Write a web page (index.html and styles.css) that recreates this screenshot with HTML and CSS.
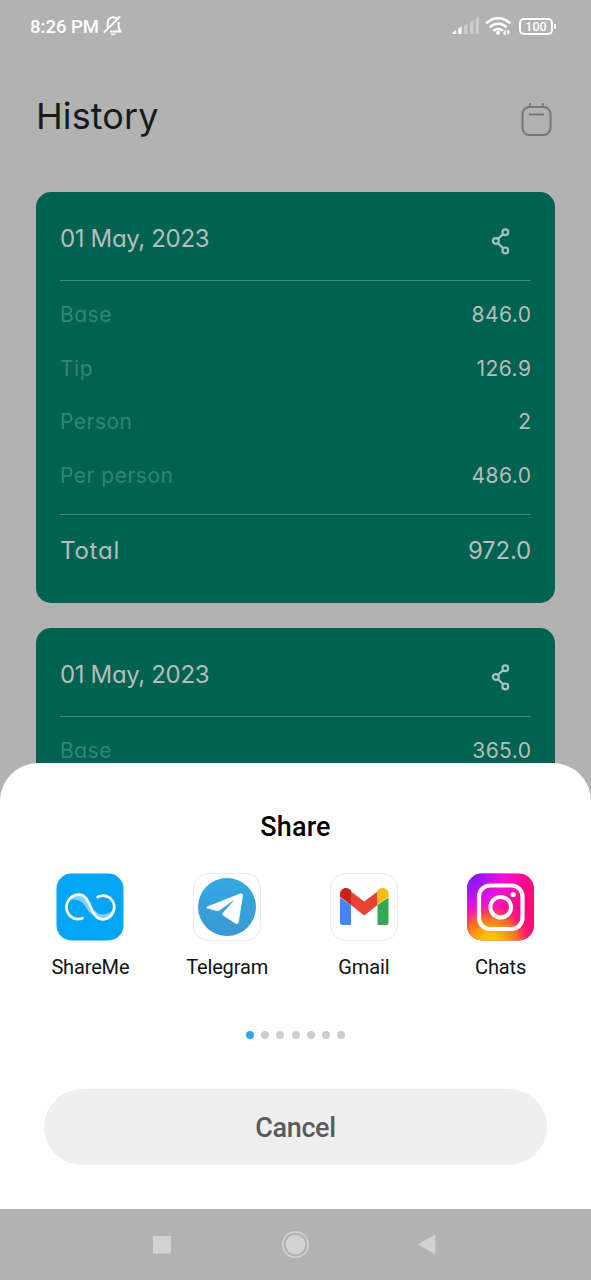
FILE: index.html
```html
<!DOCTYPE html>
<html lang="en">
<head>
<meta charset="utf-8">
<title>History</title>
<link rel="stylesheet" href="styles.css">
</head>
<body>
<div class="screen">
  <header class="status">
    <span class="clock">8:26 PM</span>
    <svg class="bell" width="20" height="22" viewBox="0 0 20 22" fill="none" stroke="#fff" stroke-width="2">
      <path d="M4.600 12.500V8.300C4.600 4.800 7 2.400 10.200 2.200c1.700 0 3 .5 4 1.500M15.600 7v5.500l2 4.100H7M.8 17.600 17.200 1.400"/>
      <path d="M7.200 18.600h5.600c-.9 2.100-4.700 2.100-5.600 0z" fill="#fff" stroke="none"/>
    </svg>
    <svg class="signal" width="28" height="18" viewBox="0 0 28 18">
      <path d="M.5 17v-1.500l3.700-2.500v4zM6.300 17v-5.500l3.200-2V17z" fill="#fff"/>
      <path d="M12 17V8.500l3.400-2V17zM18 17V5.300l3.400-2V17zM23.700 17V2l3.200-1.800V17z" fill="#cdcdcd"/>
    </svg>
    <svg class="wifi" width="26" height="20" viewBox="0 0 26 20" fill="none" stroke="#fff" stroke-width="2.500">
      <path d="M1.200 7.500c6.500-7 17.500-7 24 0M4.800 11.500c4.700-5 12.100-5 16.800 0M8.500 15c2.600-2.700 6.800-2.700 9.400 0"/>
      <circle cx="13" cy="16.800" r="2" fill="#fff" stroke="none"/>
      <path d="M20 14.500v4.500M23 14v4.500M18.300 17h1.500M23 16h1.700" stroke-width="1.500"/>
    </svg>
    <span class="battery">100</span><span class="battery-tip"></span>
  </header>

  <div class="titlebar">
    <h1 class="title">History</h1>
    <svg width="32" height="36" viewBox="0 0 32 36" fill="none" stroke="#777" stroke-width="2">
      <rect x="1.500" y="6" width="28" height="28" rx="7"/>
      <path d="M9 2v4M21.800 2v4M8 13.500h15"/>
    </svg>
  </div>

  <main class="cards">
    <section class="card">
      <div class="card-head"><span class="date">01 May, 2023</span>
        <svg class="share-icon" width="20" height="28" viewBox="0 0 20 28" fill="none" stroke="#a3c2bc" stroke-width="2.200">
          <circle cx="4.800" cy="14" r="2.900"/><circle cx="14.300" cy="5.200" r="2.900"/><circle cx="14.300" cy="23.400" r="2.900"/><path d="m6.800 11.900 5.400-4.800M6.800 16.100l5.400 5.200"/>
        </svg>
      </div>
      <div class="rows">
        <div class="row"><span class="label">Base</span><span class="value">846.0</span></div>
        <div class="row"><span class="label">Tip</span><span class="value">126.9</span></div>
        <div class="row"><span class="label">Person</span><span class="value">2</span></div>
        <div class="row"><span class="label">Per person</span><span class="value">486.0</span></div>
      </div>
      <div class="total"><span class="total-label">Total</span><span class="total-value">972.0</span></div>
    </section>
    <section class="card">
      <div class="card-head"><span class="date">01 May, 2023</span>
        <svg class="share-icon" width="20" height="28" viewBox="0 0 20 28" fill="none" stroke="#a3c2bc" stroke-width="2.200">
          <circle cx="4.800" cy="14" r="2.900"/><circle cx="14.300" cy="5.200" r="2.900"/><circle cx="14.300" cy="23.400" r="2.900"/><path d="m6.800 11.900 5.400-4.800M6.800 16.100l5.400 5.200"/>
        </svg>
      </div>
      <div class="rows">
        <div class="row"><span class="label">Base</span><span class="value">365.0</span></div>
      </div>
    </section>
  </main>

  <section class="sheet">
    <h2 class="sheet-title">Share</h2>
    <div class="apps">
      <div class="app">
        <svg width="70" height="70" viewBox="0 0 70 70">
          <rect x="1.500" y="1.500" width="67" height="67" rx="15" fill="#04a5f5"/>
          <path d="M13 29C19 20 29 20 34 32c2 6 5 10 8 12-7-1-9-5-12-10-4-6-10-8-17-5zM39 38c6 7 16 5 19-1-2 8-8 11-14 10-3-2-4-5-5-8z" fill="#80d0fa"/>
          <path d="M27.500 46.200C19 49.500 11.500 43 11.500 35.300c0-7 5.500-12.600 12.300-12.600 13 0 11 24.600 23.500 24.600 6.800 0 11.900-5.300 11.900-12 0-8.200-8.200-14.600-16.500-10.300" fill="none" stroke="#fff" stroke-width="2.700" stroke-linecap="round"/>
        </svg>
        <span class="app-name">ShareMe</span>
      </div>
      <div class="app">
        <svg width="70" height="70" viewBox="0 0 70 70">
          <defs><linearGradient id="tg" x1="0" y1="0" x2="0" y2="1"><stop offset="0" stop-color="#32a8e2"/><stop offset="1" stop-color="#3a98d3"/></linearGradient></defs>
          <rect x="1.500" y="1.500" width="67" height="67" rx="15" fill="#fff" stroke="#ebebeb"/>
          <circle cx="35" cy="35" r="29" fill="url(#tg)"/>
          <path d="M15.300 34.900 48 22c1.700-.600 2.800.200 2.500 2l-4.200 26c-.300 1.800-1.600 2.200-3 1.100L31 43c-.900-.700-.800-1.300 0-2l10.800-11.900c.7-.8-.1-1.100-1-.5L27.300 38.200c-1 .6-1.700.6-2.700.3l-9.200-2.500c-.9-.3-.8-.9-.1-1.100z" fill="#fff" stroke="#fff" stroke-width=".8" stroke-linejoin="round"/>
        </svg>
        <span class="app-name">Telegram</span>
      </div>
      <div class="app">
        <svg width="70" height="70" viewBox="0 0 70 70">
          <rect x="1.500" y="1.500" width="67" height="67" rx="15" fill="#fff" stroke="#ebebeb"/>
          <path d="M11 25.500 22 33v20H13.500a2.500 2.500 0 0 1-2.500-2.500z" fill="#4486f4"/>
          <path d="M48.500 33 59.500 25.500v25A2.500 2.500 0 0 1 57 53h-8.500z" fill="#34a752"/>
          <path d="M22 19.500 35.200 29.500 48.500 19.500V33L35.200 43.500 22 33z" fill="#e94335"/>
          <path d="M11 22c0-5 5.500-7.800 9.500-4.800l1.500 1.300V33l-11-8.300z" fill="#c5221f"/>
          <path d="M59.500 22c0-5-5.500-7.800-9.500-4.800l-1.500 1.300V33l11-8.300z" fill="#fbbc05"/>
        </svg>
        <span class="app-name">Gmail</span>
      </div>
      <div class="app">
        <svg width="70" height="70" viewBox="0 0 70 70">
          <defs>
            <linearGradient id="ig" x1="0" y1=".3" x2="1" y2=".6"><stop offset="0" stop-color="#f414c8"/><stop offset=".6" stop-color="#ff0a9b"/><stop offset="1" stop-color="#ff0870"/></linearGradient>
            <radialGradient id="igv" cx="0" cy="0" r=".85"><stop offset="0" stop-color="#5a24ff"/><stop offset=".3" stop-color="#a913f5"/><stop offset=".65" stop-color="#f010e0" stop-opacity=".8"/><stop offset="1" stop-color="#f010e0" stop-opacity="0"/></radialGradient>
            <radialGradient id="igy" cx=".35" cy="1.080" r=".66"><stop offset="0" stop-color="#ffd800"/><stop offset=".3" stop-color="#ffb808"/><stop offset=".65" stop-color="#ff6b28"/><stop offset="1" stop-color="#ff1a78" stop-opacity="0"/></radialGradient>
          </defs>
          <rect x="1" y="1.500" width="67" height="67" rx="15" fill="url(#ig)"/>
          <rect x="1" y="1.500" width="67" height="67" rx="15" fill="url(#igv)"/>
          <rect x="1" y="1.500" width="67" height="67" rx="15" fill="url(#igy)"/>
          <rect x="13" y="13.500" width="43.500" height="43.500" rx="11" fill="none" stroke="#fff" stroke-width="4.200"/>
          <circle cx="34.700" cy="35.200" r="10.300" fill="none" stroke="#fff" stroke-width="4"/>
          <circle cx="47.200" cy="22.600" r="2.700" fill="#fff"/>
        </svg>
        <span class="app-name">Chats</span>
      </div>
    </div>
    <div class="dots"><i class="dot active"></i><i class="dot"></i><i class="dot"></i><i class="dot"></i><i class="dot"></i><i class="dot"></i><i class="dot"></i></div>
    <button class="cancel">Cancel</button>
  </section>

  <nav class="navbar">
    <svg width="591" height="71" viewBox="0 0 591 71" fill="#d2d2d2">
      <rect x="153" y="27" width="18" height="17.500"/>
      <circle cx="295.500" cy="35.500" r="9.800"/>
      <circle cx="295.500" cy="35.500" r="12.700" fill="none" stroke="#d2d2d2" stroke-width="1.700"/>
      <path d="M417.500 35.500 435.500 25.500v20z"/>
    </svg>
  </nav>
</div>
</body>
</html>
```
FILE: styles.css
```css
* { box-sizing: border-box; }
body { margin: 0; background: #b2b2b2; }
.screen {
  width: 591px; height: 1280px; overflow: hidden;
  display: flex; flex-direction: column;
  background: #b2b2b2;
  font-family: Inter, "Liberation Sans", sans-serif;
  font-feature-settings: "cv11";
}
h1, h2 { margin: 0; font-weight: 400; }

.status {
  height: 52px; flex: none; padding: 0 35px 0 30px;
  display: flex; align-items: center;
  font-family: Roboto, sans-serif; color: #fff;
}
.clock { font-size: 18.500px; font-weight: 500; line-height: 24px; width: 73px; padding-top: 1px; white-space: nowrap; }
.bell { display: block; }
.signal { margin-left: auto; }
.wifi { margin-left: 5px; }
.battery {
  margin-left: 8px; width: 34px; height: 17px;
  border: 2px solid #fff; border-radius: 5px;
  font-size: 12.500px; font-weight: 500; line-height: 14px; text-align: center;
}
.battery-tip { width: 2px; height: 5px; margin-left: 1px; background: #fff; }

.titlebar {
  flex: none; height: 139.500px; padding: 44px 38px 0 36px;
  display: flex; justify-content: space-between; align-items: flex-start;
}
.title { font-size: 36px; line-height: 40px; color: #17191c; letter-spacing: .1px; }
.titlebar svg { margin-top: 5px; }

.cards {
  flex: none; height: 571.500px; overflow: hidden;
  padding: 0 36px; display: flex; flex-direction: column; gap: 24.500px;
}
.card {
  flex: none; height: 411.500px; padding: 0 24px; border-radius: 15px;
  background: #006251; color: #b5bebc;
}
.card-head {
  height: 89px; padding: 0 20.500px 0 0;
  display: flex; align-items: center; justify-content: space-between;
  border-bottom: 1px solid #3c8e7e;
}
.date { margin-top: 7px; font-size: 24px; line-height: 30px; letter-spacing: -.35px; }
.card-head .share-icon { margin-top: 11px; }
.rows { padding-top: 7px; font-size: 21px; }
.row { height: 53.700px; display: flex; justify-content: space-between; align-items: center; }
.label { color: #328676; font-weight: 400; letter-spacing: .5px; }
.value { font-weight: 370; letter-spacing: .45px; margin-right: -.45px; }
.date, .total-label, .total-value { font-weight: 370; }
.total {
  height: 72px; margin-top: 12.200px; border-top: 1px solid #3c8e7e;
  display: flex; justify-content: space-between; align-items: center;
  font-size: 24px;
}
.total-label { letter-spacing: .8px; }
.total-value { letter-spacing: -.2px; }

.sheet {
  flex: none; height: 446px; background: #fff; border-radius: 38px 38px 0 0;
  display: flex; flex-direction: column; align-items: center;
  font-family: Roboto, sans-serif;
}
.sheet-title { margin-top: 48px; font-size: 27px; line-height: 32px; font-weight: 500; color: #000; letter-spacing: .15px; }
.apps { width: 547px; margin-top: 29px; display: grid; grid-template-columns: repeat(4, 1fr); }
.app { display: flex; flex-direction: column; align-items: center; }
.app svg { display: block; }
.app-name { margin-top: 13px; font-size: 20px; line-height: 24px; color: #111; letter-spacing: -.15px; }
.dots { margin-top: 52px; display: flex; gap: 7.300px; }
.dot { width: 8px; height: 8px; border-radius: 50%; background: #ccc; }
.dot.active { background: #2ca9ed; }
.cancel {
  margin-top: 50px; width: 503px; height: 76px; border: 0; border-radius: 38px;
  background: #efefef; color: #5b5b5b; padding: 2px 0 0;
  font: 500 27px/32px Roboto, sans-serif; letter-spacing: -.35px;
}
.navbar { flex: none; height: 71px; background: #b2b2b2; }
.navbar svg { display: block; }
```
